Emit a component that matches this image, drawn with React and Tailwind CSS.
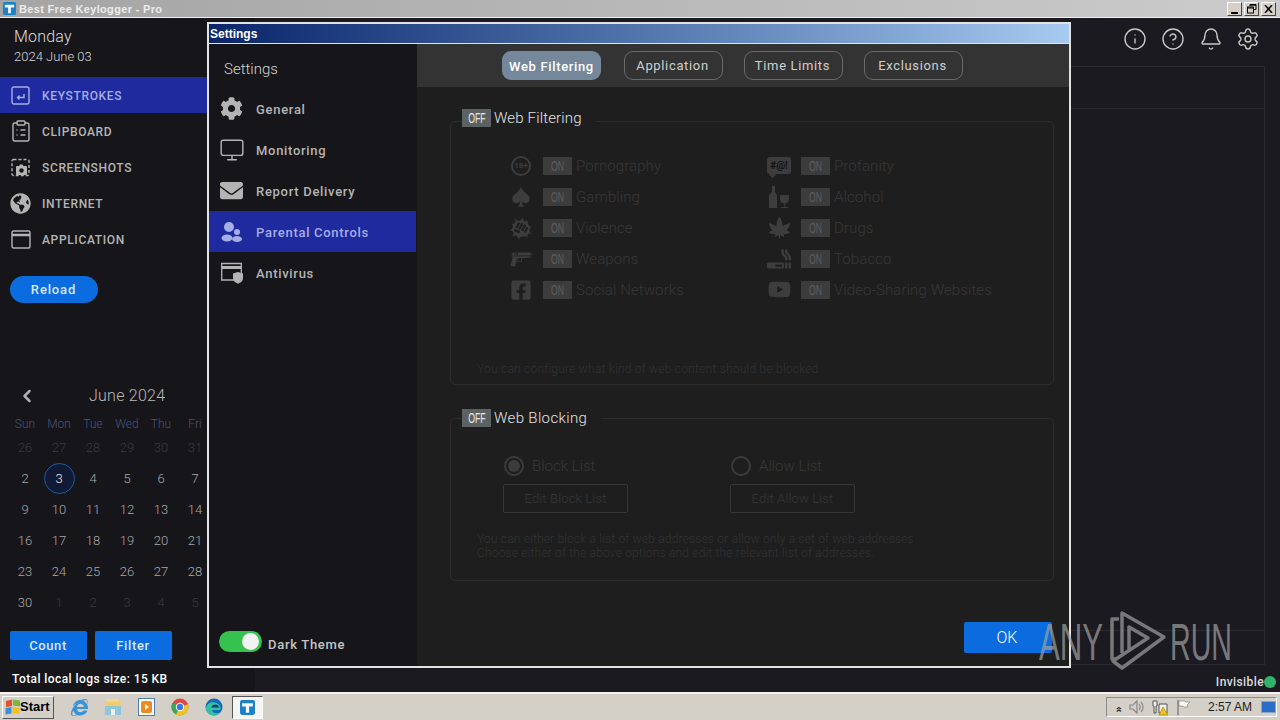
import React from "react";
import { Info, CircleHelp, Bell, Settings, ChevronLeft, Monitor, ClipboardList } from "lucide-react";
import { FaCog, FaEnvelope, FaGlobeAmericas, FaFacebookSquare, FaYoutube, FaCannabis, FaSmoking, FaInternetExplorer } from "react-icons/fa";
import { GiSpades, GiPistolGun, GiPunchBlast } from "react-icons/gi";

const roboto = "font-['Roboto',sans-serif]";

function KeyIcon() {
  return (
    <svg width="19" height="19" viewBox="0 0 19 19" fill="none" stroke="currentColor" strokeWidth="1.4">
      <rect x="1" y="1" width="17" height="17" rx="2" />
      <path d="M13 8v3.5H6.5M8.5 9.5l-2 2 2 2" />
    </svg>
  );
}
function ShotIcon() {
  return (
    <svg width="19" height="19" viewBox="0 0 19 19" fill="none" stroke="currentColor" strokeWidth="1.4">
      <rect x="1" y="1.5" width="17" height="16" rx="1.5" strokeDasharray="3 2" />
      <path fill="currentColor" stroke="none" d="M6 8h2l1-1.5h2.5L12.500 8H15a1 1 0 0 1 1 1v7a1 1 0 0 1-1 1H6a1 1 0 0 1-1-1V9a1 1 0 0 1 1-1z" />
      <circle cx="10.500" cy="12.500" r="2.200" fill="#16161a" stroke="none" />
    </svg>
  );
}
function AppIcon() {
  return (
    <svg width="20" height="19" viewBox="0 0 20 19" fill="none" stroke="currentColor" strokeWidth="1.4">
      <rect x="1" y="1" width="18" height="17" rx="1.5" />
      <path d="M1 5h18" strokeWidth="2.500" />
    </svg>
  );
}
function ParentIcon() {
  return (
    <svg width="22" height="22" viewBox="0 0 22 22" fill="currentColor">
      <ellipse cx="8" cy="6" rx="5" ry="5" />
      <circle cx="16" cy="11" r="3" />
      <ellipse cx="6" cy="17" rx="5.500" ry="3.500" />
      <ellipse cx="16" cy="18" rx="5" ry="3" />
    </svg>
  );
}
function AvIcon() {
  return (
    <svg width="24" height="22" viewBox="0 0 24 22" fill="none" stroke="currentColor" strokeWidth="1.300">
      <path d="M14 18H1.700V1.500h19.600V11" />
      <path d="M1.700 5.500h19.600" strokeWidth="3" />
      <path fill="currentColor" stroke="none" d="M18 10l5 1.500v4.500c0 3-2.500 4.800-5 5.700-2.500-.9-5-2.700-5-5.700v-4.500z" />
    </svg>
  );
}
function BottleIcon() {
  return (
    <svg width="24" height="24" viewBox="0 0 24 24" fill="currentColor">
      <path d="M5 1h3v6l2 3v13H2V10l3-3z" />
      <path d="M13 10h9v4a4.500 4.500 0 0 1-3.700 4.400V22H21v1h-7v-1h3.300v-3.600A4.500 4.500 0 0 1 13 14z" />
    </svg>
  );
}
function EighteenIcon() {
  return (
    <div className="w-[20px] h-[20px] rounded-full border-2 border-[#3d3d3d] flex items-center justify-center text-[8px] font-bold leading-none text-[#3d3d3d]">18+</div>
  );
}
function CurseIcon() {
  return (
    <div className="relative w-[24px] h-[17px] rounded-[3px] bg-[#3d3d3d] flex items-center justify-center text-[10px] font-bold leading-none text-[#111]">
      #@!
      <div className="absolute left-[3px] -bottom-[3px] w-[5px] h-[5px] bg-[#3d3d3d] rotate-45" />
    </div>
  );
}

const filters = [
  [<EighteenIcon />, "Pornography", <CurseIcon />, "Profanity"],
  [<GiSpades size={22} />, "Gambling", <BottleIcon />, "Alcohol"],
  [<GiPunchBlast size={24} />, "Violence", <FaCannabis size={21} />, "Drugs"],
  [<GiPistolGun size={24} />, "Weapons", <FaSmoking size={24} />, "Tobacco"],
  [<FaFacebookSquare size={22} />, "Social Networks", <FaYoutube size={23} />, "Video-Sharing Websites"],
];

function OnBox({ label = "ON", off = false }) {
  return (
    <div className={off ? "w-[29px] h-[18px] shrink-0 bg-[#5c6263] text-[#e6e6e6] flex items-center justify-center" : "w-[29px] h-[18px] shrink-0 bg-[#3c3c3c] text-[#5c5c5c] flex items-center justify-center"}>
      <span className="text-[14px] leading-none scale-x-[.62] font-['Liberation_Sans',sans-serif]">{label}</span>
    </div>
  );
}

function FilterCell({ icon, label, iconW }) {
  return (
    <div className="flex items-center h-[31px]">
      <div className={iconW + " flex justify-center items-center text-[#3d3d3d]"}>{icon}</div>
      <OnBox />
      <span className="ml-[4px] pt-[1px] text-[15px] font-light tracking-[0.1px] text-[#383838] whitespace-nowrap">{label}</span>
    </div>
  );
}

function Legend({ children, top }) {
  return (
    <div className={top + " absolute left-[11px] flex items-center h-[18px] gap-[3px] bg-[#1e1e1e] pr-[14px]"}>
      <OnBox label="OFF" off />
      <span className="text-[15px] font-light tracking-[0.15px] text-[#e4e4e4] whitespace-nowrap">{children}</span>
    </div>
  );
}

const navItems = [
  [<KeyIcon />, "KEYSTROKES", true],
  [<ClipboardList size={24} strokeWidth={1.4} />, "CLIPBOARD", false],
  [<ShotIcon />, "SCREENSHOTS", false],
  [<FaGlobeAmericas size={21} />, "INTERNET", false],
  [<AppIcon />, "APPLICATION", false],
];

const settingsItems = [
  [<FaCog size={23} />, "General", false],
  [<Monitor size={26} strokeWidth={1.300} />, "Monitoring", false],
  [<FaEnvelope size={23} />, "Report Delivery", false],
  [<ParentIcon />, "Parental Controls", true],
  [<AvIcon />, "Antivirus", false],
];

const weekdays = ["Sun", "Mon", "Tue", "Wed", "Thu", "Fri", "Sat"];
const days = [
  [26, 27, 28, 29, 30, 31, 1],
  [2, 3, 4, 5, 6, 7, 8],
  [9, 10, 11, 12, 13, 14, 15],
  [16, 17, 18, 19, 20, 21, 22],
  [23, 24, 25, 26, 27, 28, 29],
  [30, 1, 2, 3, 4, 5, 6],
];

function Calendar() {
  return (
    <div className="w-[238px] ml-[8px]">
      <div className="h-[24px] flex items-center relative">
        <ChevronLeft size={20} strokeWidth={3} className="text-[#b0b0b0] ml-[9px]" />
        <span className="absolute left-[81px] text-[16px] font-light tracking-[0.25px] text-[#b8b8b8] whitespace-nowrap">June 2024</span>
      </div>
      <div className="mt-[7px] grid grid-cols-7 h-[17px] w-[238px] text-[12px] font-light text-[#4a5080]">
        {weekdays.map((d) => (
          <div key={d} className="flex items-center justify-center">{d}</div>
        ))}
      </div>
      {days.map((row, r) => (
        <div key={r} className="grid grid-cols-7 h-[31px] w-[238px] text-[13px] font-light">
          {row.map((d, c) => {
            const faded = (r === 0 && d > 20) || (r === 0 && c === 6) || (r === 5 && c > 0);
            const today = r === 1 && c === 1;
            return (
              <div key={c} className="flex items-center justify-center">
                {today ? (
                  <div className="w-[31px] h-[31px] rounded-full border border-[#1c5a9c] bg-[#101a34] text-[#e8e8e8] flex items-center justify-center">{d}</div>
                ) : (
                  <span className={faded ? "text-[#3a3a3e]" : "text-[#a8a8a8]"}>{d}</span>
                )}
              </div>
            );
          })}
        </div>
      ))}
    </div>
  );
}

function Tab({ children, active, extra = "" }) {
  return (
    <div className={(active
      ? "w-[99px] h-[29px] rounded-[9px] bg-[#74879b] text-white flex items-center justify-center text-[13px] font-medium tracking-[0.65px] pt-[2px] "
      : "w-[99px] h-[29px] rounded-[9px] border border-[#6a6a6a] text-[#cfcfcf] flex items-center justify-center text-[13px] font-normal tracking-[0.65px] pr-[2px] ") + extra}>
      {children}
    </div>
  );
}

function Radio({ checked, label }) {
  return (
    <div className="flex items-center h-[20px] gap-[8px]">
      <div className="w-[20px] h-[20px] rounded-full border-2 border-[#3c3c3c] flex items-center justify-center">
        {checked && <div className="w-[12px] h-[12px] rounded-full bg-[#3c3c3c]" />}
      </div>
      <span className="text-[15px] font-light text-[#383838]">{label}</span>
    </div>
  );
}

function FlagLogo() {
  return (
    <svg width="18" height="16" viewBox="0 0 18 16">
      <path d="M2 2l6-1.500v6.500l-6 1z" fill="#e8502a" />
      <path d="M9 .5l7 1v6l-7-1z" fill="#7cb83c" />
      <path d="M1.500 9l6-1v6.500l-6 1z" fill="#3a8fe0" />
      <path d="M8.500 8l7 1v6l-7-1z" fill="#f2c21a" />
    </svg>
  );
}
function FolderLogo() {
  return (
    <svg width="18" height="18" viewBox="0 0 18 18">
      <rect x="3" y="1" width="12" height="5" fill="#f0d890" />
      <path d="M1 4h16v13H1z" fill="#f2cc6a" />
      <path d="M1 8h16v9H1z" fill="#8ec6dc" />
      <path d="M7 11h4v6H7z" fill="#eef6fa" />
    </svg>
  );
}
function MediaLogo() {
  return (
    <svg width="17" height="18" viewBox="0 0 17 18">
      <rect x=".5" y=".5" width="16" height="17" fill="#fff" stroke="#4f7fb0" />
      <rect x="3" y="3" width="11" height="12" rx="2" fill="#ee8a20" />
      <path d="M7 6l4 3-4 3z" fill="#fff" />
    </svg>
  );
}
function ChromeLogo() {
  return (
    <svg width="18" height="18" viewBox="0 0 18 18">
      <circle cx="9" cy="9" r="8.500" fill="#dd4b3e" />
      <path d="M9 9L1.600 4.700A8.500 8.500 0 0 0 5 16.500z" fill="#3aa757" />
      <path d="M9 9l8-2.700A8.500 8.500 0 0 1 5 16.500z" fill="#f3c21f" />
      <circle cx="9" cy="9" r="4.200" fill="#fff" />
      <circle cx="9" cy="9" r="3.200" fill="#3b78e7" />
    </svg>
  );
}
function EdgeLogo() {
  return (
    <svg width="18" height="18" viewBox="0 0 18 18">
      <circle cx="9" cy="9" r="8.500" fill="#0f6cbd" />
      <path d="M1 10c1-6 8-7 12-4 3 2 3 5 2 6H7c.5 3 4 4 8 2.500-2 3-5 3.500-7 3C4 17 1 14 1 10z" fill="#35c1a0" />
      <path d="M6.500 9.500c0-2 2-3 4-3s3.500 1.500 3.500 3z" fill="#0c3f7a" />
    </svg>
  );
}
function KeyLogo({ size = 14 }) {
  return (
    <svg width={size} height={size} viewBox="0 0 14 14">
      <rect width="14" height="14" rx="2" fill="#1c82c8" />
      <path d="M2 3h10v3H8.500v6h-3V6H2z" fill="#f4f8fb" />
    </svg>
  );
}

function Taskbar() {
  return (
    <div className="h-[28px] shrink-0 bg-[#d4d0c8] border-t-2 border-[#f4f2ee] flex items-center pl-[2px] pr-[3px] font-['Liberation_Sans',sans-serif]">
      <div className="w-[52px] h-[23px] border border-[#fff] border-r-[#555] border-b-[#555] flex items-center pl-[1px] text-[13px] font-bold text-black shrink-0">
        <FlagLogo />
        <span className="-ml-[2px]">Start</span>
      </div>
      <div className="flex items-center ml-[8px]">
        <div className="w-[34px] flex justify-center text-[#3a92d8]"><FaInternetExplorer size={17} /></div>
        <div className="w-[33px] flex justify-center"><FolderLogo /></div>
        <div className="w-[34px] flex justify-center"><MediaLogo /></div>
        <div className="w-[34px] flex justify-center"><ChromeLogo /></div>
        <div className="w-[34px] flex justify-center"><EdgeLogo /></div>
        <div className="w-[31px] h-[23px] bg-[#f6f5f2] border border-[#555] border-r-[#fff] border-b-[#fff] flex justify-center items-center ml-[1px]"><KeyLogo size={15} /></div>
      </div>
      <div className="ml-auto w-[171px] h-[20px] border border-[#8e8c86] border-r-[#fff] border-b-[#fff] flex items-center text-[#333]">
        <span className="ml-[6px] text-[11px] font-bold leading-none w-[10px] -rotate-90">»</span>
        <svg className="ml-[5px]" width="17" height="16" viewBox="0 0 17 16" fill="none" stroke="#8a8a8a" strokeWidth="1.200"><path d="M2 6h3l4-4v12l-4-4H2zM11 5c1.500 2 1.500 4 0 6M13 3c2.500 3 2.500 7 0 10" /></svg>
        <svg className="ml-[6px]" width="18" height="17" viewBox="0 0 18 17"><path d="M2 2h4v5H5v7H3V7H2zM8 5h8v9H8z" fill="#f0efe9" stroke="#555" /><path d="M12 8l5 8H8z" fill="#f2c21a" stroke="#8a6a00" strokeWidth=".5" /></svg>
        <svg className="ml-[7px]" width="15" height="17" viewBox="0 0 15 17"><path d="M2 1v15" stroke="#777" strokeWidth="1.300" /><path d="M3 2h6l1 1h4l-3 3 1 2H8L7 7H3z" fill="#fbfaf6" stroke="#888" strokeWidth=".7" /></svg>
        <span className="ml-[17px] text-[12px] text-[#222] whitespace-nowrap">2:57 AM</span>
        <div className="ml-[9px] w-[15px] h-[12px] bg-[#2a6cc8] border border-[#8aa4c8]" />
      </div>
    </div>
  );
}

export default function App() {
  return (
    <div className={"relative w-[1280px] h-[720px] overflow-hidden flex flex-col bg-[#1a1a20] " + roboto}>
      {/* App title bar */}
      <div className="h-[18px] shrink-0 bg-gradient-to-r from-[#a4a4a4] to-[#cccccc] flex items-center pl-[3px] border-b border-[#eeeeee] pr-[4px]">
        <KeyLogo size={13} />
        <span className="ml-[3px] pt-[1px] text-[11px] font-bold text-[#ececec] font-['Liberation_Sans',sans-serif] tracking-[0.33px]">Best Free Keylogger - Pro</span>
        <div className="ml-auto flex gap-[2px]">
          <div className="w-[15px] h-[14px] bg-[#d4d0c8] border border-[#fff] border-r-[#444] border-b-[#444] flex items-end justify-center pb-[1px]"><div className="w-[7px] h-[2px] bg-black" /></div>
          <div className="w-[15px] h-[14px] bg-[#d4d0c8] border border-[#fff] border-r-[#444] border-b-[#444] flex items-center justify-center">
            <svg width="10" height="10" viewBox="0 0 10 10" fill="none" stroke="#000"><path d="M3 2.500V.5h6v5H7" /><rect x=".5" y="3" width="6" height="6" /><path d="M.5 4h6M3 1.200h6" /></svg>
          </div>
          <div className="w-[15px] h-[14px] bg-[#d4d0c8] border border-[#fff] border-r-[#444] border-b-[#444] flex items-center justify-center">
            <svg width="9" height="8" viewBox="0 0 9 8" stroke="#000" strokeWidth="1.500"><path d="M1 0l7 8M8 0L1 8" /></svg>
          </div>
        </div>
      </div>

      {/* Main area */}
      <div className="flex-1 flex min-h-0">
        <aside className="w-[255px] shrink-0 bg-[#16161a] flex flex-col">
          <div className="h-[59px] pl-[14px] pt-[9px] shrink-0">
            <div className="text-[16px] font-light leading-[20px] tracking-[0.2px] text-[#dddddd]">Monday</div>
            <div className="text-[13px] font-light leading-[20px] text-[#d4d4d4]">2024 June 03</div>
          </div>
          {navItems.map(([icon, label, active]) => (
            <div key={label} className={active ? "h-[36px] flex items-center bg-[#1e2a9e] text-[#a6aee6]" : "h-[36px] flex items-center text-[#b4b4b4]"}>
              <div className="w-[42px] flex justify-center pr-[1px]">{icon}</div>
              <span className="pt-[1px] text-[12px] font-medium tracking-[0.65px]">{label}</span>
            </div>
          ))}
          <div className="mt-[19px] ml-[10px] w-[88px] h-[27px] rounded-full bg-[#0b6ce0] text-[#d6e8fb] flex items-center justify-center pr-[1px] text-[13px] font-medium tracking-[0.85px] shrink-0">Reload</div>
          <div className="mt-[81px]"><Calendar /></div>
          <div className="mt-[13px] ml-[10px] flex gap-[8px]">
            <div className="w-[77px] h-[29px] rounded-[2px] bg-[#0b6ce0] text-[#d6e8fb] flex items-center justify-center pr-[1px] text-[13px] font-medium tracking-[0.6px]">Count</div>
            <div className="w-[77px] h-[29px] rounded-[2px] bg-[#0b6ce0] text-[#d6e8fb] flex items-center justify-center pr-[1px] text-[13px] font-medium tracking-[0.6px]">Filter</div>
          </div>
          <div className="mt-[10px] ml-[12px] h-[18px] flex items-center text-[12px] font-medium tracking-[0.42px] text-white whitespace-nowrap">Total local logs size: 15 KB</div>
        </aside>

        <main className="flex-1 flex flex-col min-w-0">
          <div className="h-[48px] shrink-0 flex justify-end items-start pt-[9px] pr-[20px] gap-[14px] text-[#c8c8c8]">
            <Info size={24} strokeWidth={1.400} />
            <CircleHelp size={24} strokeWidth={1.400} />
            <Bell size={24} strokeWidth={1.400} />
            <Settings size={24} strokeWidth={1.400} className="-ml-[1px]" />
          </div>
          <div className="h-[599px] mr-[15px] border border-[#2a2a30] flex flex-col shrink-0">
            <div className="h-[42px] border-b border-[#2a2a30]" />
            <div className="flex-1" />
            <div className="h-[34px] border-t border-[#2a2a30]" />
          </div>
          <div className="flex-1 flex items-center justify-end pr-[4px] pt-[6px]">
            <span className="text-[12px] font-medium tracking-[0.4px] text-[#dcdcdc]">Invisible</span>
            <div className="w-[12px] h-[12px] rounded-full bg-[#2fb36b]" />
          </div>
        </main>
      </div>

      <Taskbar />

      {/* Settings dialog */}
      <div className="absolute left-[207px] top-[22px] w-[864px] h-[646px] border-2 border-[#e2e2e2] flex flex-col bg-[#1e1e1e]">
        <div className="h-[20px] shrink-0 bg-gradient-to-r from-[#0a246a] to-[#a6caf0] border-b border-[#dfe6f0] flex items-center pl-[1px]">
          <span className="pt-[1px] text-[12px] font-bold text-white font-['Liberation_Sans',sans-serif]">Settings</span>
        </div>
        <div className="flex-1 flex min-h-0">
          <div className="w-[208px] shrink-0 bg-[#16161a] flex flex-col pr-[1px]">
            <div className="h-[44px] pl-[15px] pt-[14px] text-[15px] font-light text-[#d4d4d4] leading-[22px] shrink-0">Settings</div>
            {settingsItems.map(([icon, label, active]) => (
              <div key={label} className={active ? "h-[41px] flex items-center bg-[#1e2a9e] text-[#a6aee6]" : "h-[41px] flex items-center text-[#b4b4b4]"}>
                <div className="w-[47px] flex justify-center pr-[2px]">{icon}</div>
                <span className="pt-[2px] text-[13px] font-medium tracking-[0.7px]">{label}</span>
              </div>
            ))}
            <div className="mt-auto mb-[13px] ml-[10px] flex items-center">
              <div className="w-[43px] h-[21px] rounded-full bg-[#36c24e] flex items-center justify-end pr-[3px]">
                <div className="w-[17px] h-[17px] rounded-full bg-[#f2f2f2]" />
              </div>
              <span className="ml-[6px] pt-[4px] translate-y-[1px] text-[13px] font-medium tracking-[0.7px] text-[#c4c4c4]">Dark Theme</span>
            </div>
          </div>

          <div className="flex-1 min-w-0 flex flex-col">
            <div className="h-[43px] shrink-0 bg-[#333333] flex pl-[85px] pt-[7px] gap-[21px]">
              <Tab active extra="mr-[2px]">Web Filtering</Tab>
              <Tab>Application</Tab>
              <Tab>Time Limits</Tab>
              <Tab>Exclusions</Tab>
            </div>

            <div className="relative mt-[34px] ml-[33px] mr-[15px] h-[264px] border border-[#2c2c2c] rounded-[5px] shrink-0 flex flex-col">
              <Legend top="-top-[13px]">Web Filtering</Legend>
              <div className="pt-[28px] pl-[58px]">
                {filters.map(([i1, l1, i2, l2]) => (
                  <div key={l1} className="grid grid-cols-[258px_1fr]">
                    <FilterCell icon={i1} label={l1} iconW="w-[26px] mr-[9px] -ml-[1px]" />
                    <FilterCell icon={i2} label={l2} iconW="w-[26px] mr-[9px] -ml-[1px]" />
                  </div>
                ))}
              </div>
              <div className="mt-auto mb-[8px] pl-[26px] text-[12px] font-light tracking-[0.23px] text-[#333333] leading-[14px]">You can configure what kind of web content should be blocked</div>
            </div>

            <div className="relative mt-[33px] ml-[33px] mr-[15px] h-[163px] border border-[#2c2c2c] rounded-[5px] shrink-0">
              <Legend top="-top-[10px]"><span className="tracking-[0.35px]">Web Blocking</span></Legend>
              <div className="pt-[37px] pl-[52px] flex gap-[102px]">
                <div className="w-[125px] flex flex-col gap-[8px]">
                  <div className="pl-[1px]"><Radio checked label="Block List" /></div>
                  <div className="h-[29px] border border-[#363636] rounded-[2px] text-[13px] font-light tracking-[0.15px] text-[#383838] flex items-center justify-center">Edit Block List</div>
                </div>
                <div className="w-[125px] flex flex-col gap-[8px]">
                  <div className="pl-[1px]"><Radio label="Allow List" /></div>
                  <div className="h-[29px] border border-[#363636] rounded-[2px] text-[13px] font-light tracking-[0.15px] text-[#383838] flex items-center justify-center">Edit Allow List</div>
                </div>
              </div>
              <div className="mt-[19px] pl-[26px] text-[12px] font-light tracking-[0.18px] text-[#333333] leading-[14px]">
                <div>You can either block a list of web addresses or allow only a set of web addresses</div>
                <div>Choose either of the above options and edit the relevant list of addresses.</div>
              </div>
            </div>

            <div className="mt-[41px] ml-auto mr-[17px] w-[88px] h-[31px] bg-[#0b6ce0] rounded-[2px] text-white text-[16px] font-light flex items-center justify-center pr-[2px] shrink-0">OK</div>
          </div>
        </div>
      </div>

      {/* ANY.RUN watermark */}
      <div className="absolute left-[1039px] top-[611px] h-[60px] w-[200px] text-[#a0a0a0] opacity-70 pointer-events-none">
        <span className="absolute left-0 top-[5px] text-[52px] leading-[52px] font-light origin-left scale-x-[.6] whitespace-nowrap font-['Liberation_Sans',sans-serif]">ANY</span>
        <svg className="absolute left-[68px] top-0" width="62" height="60" viewBox="0 0 62 60" fill="none" stroke="currentColor" strokeWidth="3.500" strokeLinejoin="round">
          <path d="M12 8H5v40h4" />
          <path d="M15 42V2l42 24-42 31-9-7 35-23-19-11v24" />
        </svg>
        <span className="absolute left-[131px] top-[5px] text-[52px] leading-[52px] font-light origin-left scale-x-[.55] whitespace-nowrap font-['Liberation_Sans',sans-serif]">RUN</span>
      </div>
    </div>
  );
}
